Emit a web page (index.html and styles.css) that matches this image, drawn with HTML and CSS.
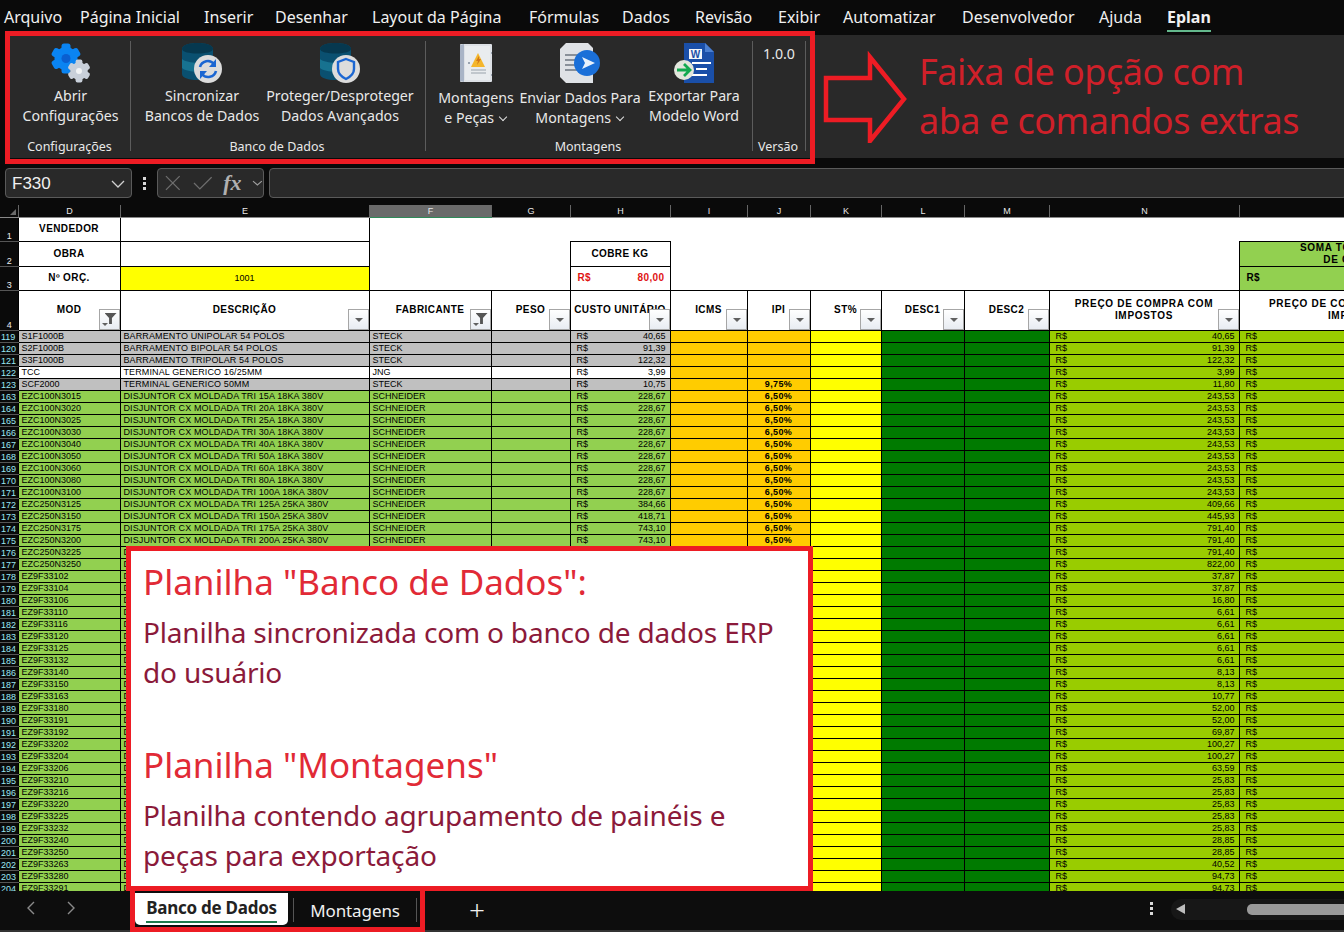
FILE: index.html
```html
<!DOCTYPE html>
<html lang="pt-BR">
<head>
    <meta charset="UTF-8">
    <title>Eplan - Banco de Dados</title>
    <link rel="stylesheet" href="styles.css">
</head>
<body>
    <svg class="defs" width="0" height="0">
        <defs>
            <g id="gear">
                <circle r="11.5"/>
                <rect x="-4.5" y="-15" width="9" height="30" rx="2.5"/>
                <rect x="-4.5" y="-15" width="9" height="30" rx="2.5" transform="rotate(60)"/>
                <rect x="-4.5" y="-15" width="9" height="30" rx="2.5" transform="rotate(120)"/>
            </g>
            <g id="db">
                <path d="M0 6 C0 -2 31 -2 31 6 V31 C31 39 0 39 0 31 Z" fill="#0a5070"/>
                <path d="M0 6 C0 -2 31 -2 31 6 C31 12 0 12 0 6 Z" fill="#06384f"/>
                <path d="M0 16 C6 21 25 21 31 16 V25 C25 30 6 30 0 25 Z" fill="#177290"/>
                <circle cx="26" cy="26" r="14" fill="#dcdcdc"/>
            </g>
        </defs>
    </svg>

    <!-- Menu tabs -->
    <nav class="menu">
        <span>Arquivo</span>
        <span>Página Inicial</span>
        <span>Inserir</span>
        <span>Desenhar</span>
        <span>Layout da Página</span>
        <span>Fórmulas</span>
        <span>Dados</span>
        <span>Revisão</span>
        <span>Exibir</span>
        <span>Automatizar</span>
        <span>Desenvolvedor</span>
        <span>Ajuda</span>
        <span class="menu-active">Eplan</span>
    </nav>

    <!-- Ribbon -->
    <section class="ribbon">
        <div class="group group-config">
            <div class="group-buttons">
                <div class="rb rb-config">
                    <svg class="rb-icon" viewBox="0 0 40 40">
                        <use href="#gear" fill="#0a84f2" transform="translate(15 15.5)"/>
                        <circle cx="15" cy="15.5" r="4.5" fill="#0a5fd0"/>
                        <use href="#gear" fill="#c9d0da" transform="translate(28 28) scale(.76)"/>
                        <circle cx="28" cy="28" r="3" fill="#f2f4f6"/>
                    </svg>
                    <span>Abrir<br>Configurações</span>
                </div>
            </div>
            <div class="group-label">Configurações</div>
        </div>
        <div class="group group-banco">
            <div class="group-buttons">
                <div class="rb rb-sync">
                    <svg class="rb-icon" viewBox="0 0 40 40">
                        <use href="#db"/>
                        <path d="M18 24 A8 8 0 0 1 32 21" fill="none" stroke="#1b66d2" stroke-width="2.6"/>
                        <path d="M34 28 A8 8 0 0 1 20 31" fill="none" stroke="#1b66d2" stroke-width="2.6"/>
                        <path d="M34 16 V24 H27 Z M18 36 V28 H25 Z" fill="#1b66d2"/>
                    </svg>
                    <span>Sincronizar<br>Bancos de Dados</span>
                </div>
                <div class="rb rb-protect">
                    <svg class="rb-icon" viewBox="0 0 40 40">
                        <use href="#db"/>
                        <path d="M26 16 L34 19 V26 C34 31 30 34 26 36 C22 34 18 31 18 26 V19 Z" fill="none" stroke="#1b66d2" stroke-width="2.4"/>
                    </svg>
                    <span>Proteger/Desproteger<br>Dados Avançados</span>
                </div>
            </div>
            <div class="group-label">Banco de Dados</div>
        </div>
        <div class="group group-mont">
            <div class="group-buttons">
                <div class="rb rb-pecas rb-low">
                    <svg class="rb-icon" viewBox="0 0 40 40">
                        <rect x="4" y="1" width="32" height="38" rx="1" fill="#dde1e6"/>
                        <path d="M4 2 L8 1 V39 L4 38 Z" fill="#a9b4c6"/>
                        <rect x="9" y="3" width="25" height="34" fill="#e9ecef"/>
                        <path d="M22 10 L29 24 H15 Z" fill="#f4b62c"/>
                        <path d="M23 13 L20 18 H22 L21 22 L25 16 H23 Z" fill="#d0771a"/>
                        <path d="M15 27 H30 M15 30 H30" stroke="#b4bac2" stroke-width="1.4"/>
                        <path d="M12 20 H14 M35 10 H36 M35 32 H36" stroke="#9aa4b0" stroke-width="2"/>
                    </svg>
                    <span>Montagens<br>e Peças <small class="chev"></small></span>
                </div>
                <div class="rb rb-enviar rb-low">
                    <svg class="rb-icon" viewBox="0 0 40 40">
                        <path d="M6 0 H28 L33 5 V40 H6 L0 34 V6 Z" fill="#dfe2e6"/>
                        <path d="M5 12 H18 M5 17 H16 M5 22 H16 M5 27 H18" stroke="#6d7680" stroke-width="1.3"/>
                        <circle cx="27" cy="20" r="13" fill="#1a6fd8"/>
                        <path d="M22 14 L35 20 L22 26 L25 20 Z" fill="#e8f1fc"/>
                    </svg>
                    <span>Enviar Dados Para<br>Montagens <small class="chev"></small></span>
                </div>
                <div class="rb rb-word">
                    <svg class="rb-icon" viewBox="0 0 40 40">
                        <path d="M10 0 H31 L40 9 V40 H10 Z" fill="#1a4fa8"/>
                        <path d="M31 0 L40 9 H31 Z" fill="#4a7fd0"/>
                        <rect x="15" y="6" width="13" height="10" fill="#f4f6fa"/>
                        <text x="21.5" y="14.6" class="word-w">W</text>
                        <path d="M18 20 H37 M22 26 H33 M18 32 H33" stroke="#fff" stroke-width="2"/>
                        <circle cx="10" cy="27" r="10" fill="#e2e6dc"/>
                        <path d="M3 27 H15 M10 21 L16 27 L10 33" fill="none" stroke="#12a94f" stroke-width="2.8"/>
                    </svg>
                    <span>Exportar Para<br>Modelo Word</span>
                </div>
            </div>
            <div class="group-label">Montagens</div>
        </div>
        <div class="group group-versao">
            <div class="group-buttons">
                <div class="version">1.0.0</div>
            </div>
            <div class="group-label">Versão</div>
        </div>
        <div class="ribbon-note">
            <svg class="note-arrow" viewBox="0 0 84 92">
                <path d="M3 27 H47 V6 L81 48 L47 90 V69 H3 Z" fill="none" stroke="#ed1c24" stroke-width="4.5"/>
            </svg>
            <p class="note-text">Faixa de opção com<br>aba e comandos extras</p>
        </div>
    </section>

    <!-- Formula bar -->
    <div class="formula-bar">
        <div class="name-box">
            <span>F330</span>
            <svg width="14" height="8" viewBox="0 0 14 8"><path d="M1 1 L7 7 L13 1" fill="none" stroke="#d0d0d0" stroke-width="1.3"/></svg>
        </div>
        <div class="fb-dots"><i></i><i></i><i></i></div>
        <div class="fx-box">
            <svg width="18" height="18" viewBox="0 0 18 18"><path d="M2 2 L16 16 M16 2 L2 16" stroke="#6e6e6e" stroke-width="1.3"/></svg>
            <svg width="20" height="16" viewBox="0 0 20 16"><path d="M1 8 L7 14 L19 2" fill="none" stroke="#6e6e6e" stroke-width="1.3"/></svg>
            <span class="fx">fx</span>
            <svg width="11" height="6" viewBox="0 0 11 6"><path d="M1 1 L5.5 5 L10 1" fill="none" stroke="#a0a0a0" stroke-width="1.1"/></svg>
        </div>
        <div class="fb-input"></div>
    </div>

    <!-- Sheet -->
    <main class="sheet">
        <table class="grid">
            <colgroup>
                <col class="c18"><col class="c102"><col class="c249"><col class="c122"><col class="c79"><col class="c100"><col class="c77"><col class="c63"><col class="c71"><col class="c83"><col class="c85"><col class="c190"><col class="c236">
            </colgroup>
            <thead>
                <tr class="col-heads">
                    <th class="corner"><b></b></th>
                    <th>D</th><th>E</th><th class="col-sel">F</th><th>G</th><th>H</th><th>I</th><th>J</th><th>K</th><th>L</th><th>M</th><th>N</th><th></th>
                </tr>
            </thead>
            <tbody id="rows">
                <tr class="r24">
                    <th class="rn">1</th>
                    <td class="hd">VENDEDOR</td><td></td>
                    <td colspan="9" class="blank"></td><td class="blank"></td>
                </tr>
                <tr class="r24">
                    <th class="rn">2</th>
                    <td class="hd">OBRA</td><td></td>
                    <td colspan="2" rowspan="2" class="blank"></td>
                    <td class="hd">COBRE KG</td>
                    <td colspan="6" rowspan="2" class="blank"></td>
                    <td class="hd bg-green tight">SOMA TOTAL PREÇO<br>DE COMPRA</td>
                </tr>
                <tr class="r24">
                    <th class="rn">3</th>
                    <td class="hd">Nº ORÇ.</td><td class="center bg-yellow">1001</td>
                    <td class="hd cobre"><em>R$</em>80,00</td>
                    <td class="hd bg-green total"><em>R$</em></td>
                </tr>
                <tr class="r40">
                    <th class="rn">4</th>
                    <td class="hd has-filter">MOD<u class="filter on"></u></td>
                    <td class="hd has-filter">DESCRIÇÃO<u class="filter"></u></td>
                    <td class="hd has-filter">FABRICANTE<u class="filter on"></u></td>
                    <td class="hd has-filter">PESO<u class="filter"></u></td>
                    <td class="hd has-filter">CUSTO UNITÁRIO<u class="filter"></u></td>
                    <td class="hd has-filter">ICMS<u class="filter"></u></td>
                    <td class="hd has-filter">IPI<u class="filter"></u></td>
                    <td class="hd has-filter">ST%<u class="filter"></u></td>
                    <td class="hd has-filter">DESC1<u class="filter"></u></td>
                    <td class="hd has-filter">DESC2<u class="filter"></u></td>
                    <td class="hd has-filter tight">PREÇO DE COMPRA COM<br>IMPOSTOS<u class="filter"></u></td>
                    <td class="hd tight">PREÇO DE COMPRA COM DESC.<br>IMPOSTOS</td>
                </tr>
            </tbody>
        </table>
    </main>

    <!-- Sheet tabs -->
    <footer class="sheet-tabs">
        <div class="tab-arrows">
            <svg width="10" height="14" viewBox="0 0 10 14"><path d="M8 1 L2 7 L8 13" fill="none" stroke="#8a8a8a" stroke-width="1.4"/></svg>
            <svg width="10" height="14" viewBox="0 0 10 14"><path d="M2 1 L8 7 L2 13" fill="none" stroke="#8a8a8a" stroke-width="1.4"/></svg>
        </div>
        <div class="tab tab-active"><span>Banco de Dados</span></div>
        <div class="tab tab-other">Montagens</div>
        <div class="tab-add">+</div>
        <div class="fb-dots tab-dots"><i></i><i></i><i></i></div>
        <div class="hscroll">
            <b class="hscroll-left"></b>
            <b class="hscroll-thumb"></b>
        </div>
    </footer>

    <!-- Red annotations over the screenshot -->
    <div class="mark mark-ribbon"></div>
    <div class="mark mark-tabs"></div>
    <aside class="panel">
        <h2>Planilha "Banco de Dados":</h2>
        <p>Planilha sincronizada com o banco de dados ERP<br>do usuário</p>
        <h2 class="panel-second">Planilha "Montagens"</h2>
        <p>Planilha contendo agrupamento de painéis e<br>peças para exportação</p>
    </aside>

    <script src="script.js"></script>
</body>
</html>
```

FILE: styles.css
```css
/* Page */
html, body {
    margin: 0;
    height: 932px;
    overflow: hidden;
}
body {
    position: relative;
    display: flex;
    flex-direction: column;
    background: #0a0a0a;
    color: #f0f0f0;
    font-family: "Noto Sans", sans-serif;
}
.defs {
    position: absolute;
}

/* Menu */
.menu {
    height: 35px;
    flex: none;
    display: grid;
    grid-template-columns: 76px 124px 71px 97px 157px 93px 73px 83px 65px 119px 137px 68px auto;
    justify-content: start;
    justify-items: start;
    padding-left: 4px;
    font-size: 16px;
    line-height: 34px;
    white-space: nowrap;
}
.menu-active {
    position: relative;
    font-weight: 700;
}
.menu-active::after {
    content: "";
    position: absolute;
    left: 0;
    right: 0;
    bottom: 3px;
    height: 2px;
    background: #63b88c;
}

/* Ribbon */
.ribbon {
    height: 123px;
    flex: none;
    display: flex;
    margin-left: 5px;
    padding: 6px 0 0 6px;
    box-sizing: border-box;
    background: #292929;
    font-size: 14.2px;
    line-height: 20px;
    color: #e8e8e8;
}
.group {
    height: 110px;
    display: flex;
    flex-direction: column;
    box-sizing: border-box;
    border-right: 1px solid #5c5c5c;
}
.group-config { width: 120px; }
.group-banco { width: 295px; padding-left: 9px; }
.group-mont { width: 327px; padding-left: 10px; }
.group-versao { width: 53px; }
.group-buttons {
    flex: 1;
    display: flex;
}
.group-label {
    height: 14px;
    margin-top: auto;
    margin-bottom: -3px;
    padding-right: 2px;
    font-size: 12.5px;
    line-height: 14px;
    text-align: center;
}
.group-banco .group-label { margin-left: -9px; }
.group-mont .group-label { margin-left: -10px; }
.rb {
    display: flex;
    flex-direction: column;
    align-items: center;
    text-align: center;
    padding-top: 2px;
    white-space: nowrap;
}
.rb-icon {
    width: 40px;
    height: 40px;
    flex: none;
    margin-bottom: 3px;
}
.rb-low .rb-icon { margin-bottom: 5px; }
.rb-config { width: 119px; }
.rb-sync { width: 124px; }
.rb-protect { width: 152px; }
.rb-pecas { width: 80px; }
.rb-enviar { width: 128px; }
.rb-word { width: 100px; }
.chev {
    display: inline-block;
    width: 5px;
    height: 5px;
    margin: 0 2px 3px 2px;
    border-right: 1.3px solid #e0e0e0;
    border-bottom: 1.3px solid #e0e0e0;
    transform: rotate(45deg);
}
.word-w {
    font: 700 10px "Liberation Sans", sans-serif;
    text-anchor: middle;
    fill: #1a4fa8;
}
.version {
    width: 100%;
    padding-top: 3px;
    text-align: center;
}
.ribbon-note {
    display: flex;
    align-items: flex-start;
}
.note-arrow {
    width: 84px;
    height: 92px;
    margin: 10px 0 0 17px;
    flex: none;
}
.note-text {
    margin: 6px 0 0 12px;
    font-size: 36px;
    letter-spacing: -.5px;
    line-height: 49px;
    color: #cf2029;
    white-space: nowrap;
}

/* Formula bar */
.formula-bar {
    height: 30px;
    flex: none;
    display: flex;
    align-items: stretch;
    margin-top: 10px;
    padding-left: 5px;
}
.name-box, .fx-box, .fb-input {
    box-sizing: border-box;
    border: 1px solid #5a5a5a;
    border-radius: 4px;
    background: #292929;
    display: flex;
    align-items: center;
}
.name-box {
    width: 127px;
    padding: 2px 6px 0 6px;
    justify-content: space-between;
    font: 17px "Liberation Sans", sans-serif;
}
.fb-dots {
    width: 25px;
    display: flex;
    flex-direction: column;
    align-items: center;
    justify-content: center;
    gap: 2px;
}
.fb-dots i {
    width: 3px;
    height: 3px;
    background: #d8d8d8;
}
.fx-box {
    width: 107px;
    padding: 0 0 0 6px;
    gap: 11px;
}
.fx {
    width: 18px;
    font: italic 700 22px "Liberation Serif", serif;
    color: #b0b0b0;
}
.fb-input {
    flex: 1;
    margin-left: 5px;
    margin-right: -3px;
}

/* Sheet */
.sheet {
    height: 686px;
    flex: none;
    margin-top: 7px;
    overflow: hidden;
}
.grid {
    width: 1475px;
    table-layout: fixed;
    border-collapse: collapse;
    background: #fff;
    color: #000;
    font: 9px/11px "Liberation Sans", sans-serif;
}
.c18 { width: 18px; }
.c102 { width: 102px; }
.c249 { width: 249px; }
.c122 { width: 122px; }
.c79 { width: 79px; }
.c100 { width: 100px; }
.c77 { width: 77px; }
.c63 { width: 63px; }
.c71 { width: 71px; }
.c83 { width: 83px; }
.c85 { width: 85px; }
.c190 { width: 190px; }
.c236 { width: 236px; }
.grid tr { height: 12px; }
.grid td {
    border: 1px solid #000;
    padding: 0 2px;
    white-space: nowrap;
    overflow: hidden;
}
.col-heads th {
    height: 12px;
    padding: 0 0 0 1px;
    background: #0a0a0a;
    border-right: 1px solid #666;
    border-bottom: 1px solid #888;
    color: #e8e8e8;
    font-size: 9px;
    font-weight: 400;
    line-height: 11px;
}
.col-heads .col-sel {
    background: #6a6a6a;
    border-bottom: 1px solid #2e8a58;
}
.corner b {
    display: block;
    width: 0;
    height: 0;
    margin: 2px 2px 0 auto;
    border-left: 6px solid transparent;
    border-bottom: 6px solid #6a6a6a;
}
.grid .rn {
    padding: 0 0 0 1px;
    background: #0a0a0a;
    border: 0;
    border-bottom: 1px solid #555;
    color: #9ae6f2;
    font-size: 9px;
    font-weight: 400;
    line-height: 10px;
    text-align: left;
}
.r24 { height: 24px !important; }
.r40 { height: 40px !important; }
.r24 .rn, .r40 .rn {
    vertical-align: bottom;
    text-align: center;
    color: #eee;
}
.grid .blank {
    border: 0;
}
.grid .hd {
    position: relative;
    padding: 0 2px 2px;
    background-color: #fff;
    font-size: 10px;
    font-weight: 700;
    letter-spacing: .4px;
    text-align: center;
}
.grid .tight {
    letter-spacing: .7px;
    line-height: 12px;
}
.grid .bg-green { background: #92d050; }
.grid .bg-green.tight { padding-bottom: 0; }
.center { text-align: center; }
.bg-yellow { background: #ffff00; }
.grid .cobre {
    padding: 0 5px 2px 7px;
    color: #e01414;
    text-align: right;
}
.grid .total {
    padding-left: 7px;
    text-align: left;
}
.hd em {
    float: left;
    font-style: normal;
}
.filter {
    position: absolute;
    right: 0;
    bottom: 0;
    width: 21px;
    height: 21px;
    box-sizing: border-box;
    border: 1px solid #a6a6a6;
    background: linear-gradient(#fff, #e8ecf2);
}
.filter::after {
    content: "";
    position: absolute;
    left: 6px;
    top: 8px;
    border-left: 4px solid transparent;
    border-right: 4px solid transparent;
    border-top: 4px solid #606060;
}
.filter.on::before {
    content: "";
    position: absolute;
    left: 5px;
    top: 3px;
    width: 12px;
    height: 11px;
    background: #555;
    clip-path: polygon(0 0, 100% 0, 62% 45%, 62% 100%, 38% 100%, 38% 45%);
}
.filter.on::after {
    left: 2px;
    top: 13px;
    border-left-width: 3px;
    border-right-width: 3px;
    border-top-width: 3px;
}

/* Data rows */
.row .rn { color: #9ae6f2; }
.grey td { background: #c0c0c0; }
.white td { background: #fff; }
.green td { background: #92d050; }
.row td:nth-child(n+7) { background: #ffcc00; }
.row td:nth-child(9) { background: #ffff00; }
.row td:nth-child(10), .row td:nth-child(11) { background: #007a00; }
.row td:nth-child(12), .row td:nth-child(13) { background: #99cc00; }
.row td:nth-child(2), .row td:nth-child(4) { padding-left: 3px; }
.row td:nth-child(3) {
    padding-left: 3px;
    letter-spacing: .12px;
}
.money {
    padding: 0 4px 0 6px !important;
    text-align: right;
}
.money i {
    float: left;
    font-style: normal;
}
.ipi {
    font-weight: 700;
    letter-spacing: .4px;
    text-align: center;
}

/* Sheet tabs */
.sheet-tabs {
    flex: 1;
    position: relative;
    display: flex;
    align-items: flex-start;
    box-sizing: border-box;
    border-bottom: 2px solid #333;
    background: #0d0d0d;
}
.tab-arrows {
    width: 135px;
    flex: none;
    display: flex;
    gap: 30px;
    padding: 10px 0 0 26px;
    box-sizing: border-box;
}
.tab {
    height: 32px;
    flex: none;
    box-sizing: border-box;
    font-size: 17px;
    white-space: nowrap;
    text-align: center;
}
.tab-active {
    width: 153px;
    margin-top: 2px;
    border-radius: 0 0 5px 5px;
    background: #fff;
    color: #222;
    font-weight: 700;
    letter-spacing: -.25px;
    line-height: 29px;
}
.tab-active span {
    display: inline-block;
    height: 28px;
    border-bottom: 2px solid #1f7a4d;
}
.tab-other {
    width: 124px;
    height: 24px;
    margin: 7px 0 0 5px;
    border-left: 1px solid #555;
    border-right: 1px solid #555;
    letter-spacing: -.1px;
    line-height: 25px;
}
.tab-add {
    margin: 2px 0 0 52px;
    font-size: 28px;
    line-height: 32px;
    font-weight: 300;
}
.tab-dots {
    position: absolute;
    left: 1139px;
    top: 11px;
}
.hscroll {
    position: absolute;
    left: 1171px;
    top: 8px;
    width: 180px;
    height: 21px;
    border-radius: 10px 0 0 10px;
    background: #171717;
}
.hscroll-left {
    position: absolute;
    left: 5px;
    top: 5px;
    border-top: 5px solid transparent;
    border-bottom: 5px solid transparent;
    border-right: 9px solid #bdbdbd;
}
.hscroll-thumb {
    position: absolute;
    left: 76px;
    top: 5px;
    width: 120px;
    height: 11px;
    border-radius: 5px;
    background: #9a9a9a;
}

/* Annotations */
.mark {
    position: absolute;
    box-sizing: border-box;
    border: 5px solid #ed1c24;
}
.mark-ribbon {
    left: 5px;
    top: 31px;
    width: 810px;
    height: 133px;
}
.mark-tabs {
    left: 130px;
    top: 886px;
    width: 295px;
    height: 46px;
}
.panel {
    position: absolute;
    left: 126px;
    top: 546px;
    width: 687px;
    height: 345px;
    box-sizing: border-box;
    border: 5px solid #ed1c24;
    background: #fff;
    padding: 8px 0 0 12px;
    color: #8b1a3a;
}
.panel h2 {
    margin: 0;
    font-size: 35px;
    font-weight: 400;
    line-height: 46px;
    color: #e12a36;
}
.panel p {
    margin: 8px 0 0;
    font-size: 28px;
    letter-spacing: -.18px;
    line-height: 39.5px;
}
.panel .panel-second {
    margin-top: 50px;
}
```

FILE: script.js
```js
// Data rows of the sheet: filtered view, so row numbers jump
const tbody = document.getElementById('rows');

function addRow(num, cls, mod, desc, fab, cost, ipi, price) {
    const tr = document.createElement('tr');
    tr.className = 'row ' + cls;
    const money = v => v ? '<i>R$</i>' + v : '';
    tr.innerHTML = '<th class="rn">' + num + '</th>' +
        '<td>' + mod + '</td><td>' + desc + '</td><td>' + fab + '</td><td></td>' +
        '<td class="money">' + money(cost) + '</td><td></td>' +
        '<td class="ipi">' + ipi + '</td><td></td><td></td><td></td>' +
        '<td class="money">' + money(price) + '</td><td class="money"><i>R$</i></td>';
    tbody.appendChild(tr);
}

addRow(119, 'grey', 'S1F1000B', 'BARRAMENTO UNIPOLAR 54 POLOS', 'STECK', '40,65', '', '40,65');
addRow(120, 'grey', 'S2F1000B', 'BARRAMENTO BIPOLAR 54 POLOS', 'STECK', '91,39', '', '91,39');
addRow(121, 'grey', 'S3F1000B', 'BARRAMENTO TRIPOLAR 54 POLOS', 'STECK', '122,32', '', '122,32');
addRow(122, 'white', 'TCC', 'TERMINAL GENERICO 16/25MM', 'JNG', '3,99', '', '3,99');
addRow(123, 'grey', 'SCF2000', 'TERMINAL GENERICO 50MM', 'STECK', '10,75', '9,75%', '11,80');

const breakers = [
    ['EZC100N3015', 15, 18, '228,67', '243,53'],
    ['EZC100N3020', 20, 18, '228,67', '243,53'],
    ['EZC100N3025', 25, 18, '228,67', '243,53'],
    ['EZC100N3030', 30, 18, '228,67', '243,53'],
    ['EZC100N3040', 40, 18, '228,67', '243,53'],
    ['EZC100N3050', 50, 18, '228,67', '243,53'],
    ['EZC100N3060', 60, 18, '228,67', '243,53'],
    ['EZC100N3080', 80, 18, '228,67', '243,53'],
    ['EZC100N3100', 100, 18, '228,67', '243,53'],
    ['EZC250N3125', 125, 25, '384,66', '409,66'],
    ['EZC250N3150', 150, 25, '418,71', '445,93'],
    ['EZC250N3175', 175, 25, '743,10', '791,40'],
    ['EZC250N3200', 200, 25, '743,10', '791,40']
];
breakers.forEach(function(b, i) {
    addRow(163 + i, 'green', b[0], 'DISJUNTOR CX MOLDADA TRI ' + b[1] + 'A ' + b[2] + 'KA 380V', 'SCHNEIDER', b[3], '6,50%', b[4]);
});

// These rows are behind the white note, only model, first letter and price show
const covered = [
    ['EZC250N3225', '791,40'], ['EZC250N3250', '822,00'], ['EZ9F33102', '37,87'],
    ['EZ9F33104', '37,87'], ['EZ9F33106', '16,80'], ['EZ9F33110', '6,61'],
    ['EZ9F33116', '6,61'], ['EZ9F33120', '6,61'], ['EZ9F33125', '6,61'],
    ['EZ9F33132', '6,61'], ['EZ9F33140', '8,13'], ['EZ9F33150', '8,13'],
    ['EZ9F33163', '10,77'], ['EZ9F33180', '52,00'], ['EZ9F33191', '52,00'],
    ['EZ9F33192', '69,87'], ['EZ9F33202', '100,27'], ['EZ9F33204', '100,27'],
    ['EZ9F33206', '63,59'], ['EZ9F33210', '25,83'], ['EZ9F33216', '25,83'],
    ['EZ9F33220', '25,83'], ['EZ9F33225', '25,83'], ['EZ9F33232', '25,83'],
    ['EZ9F33240', '28,85'], ['EZ9F33250', '28,85'], ['EZ9F33263', '40,52'],
    ['EZ9F33280', '94,73'], ['EZ9F33291', '94,73']
];
covered.forEach(function(c, i) {
    addRow(176 + i, 'green', c[0], 'D', '', '', '', c[1]);
});
```
